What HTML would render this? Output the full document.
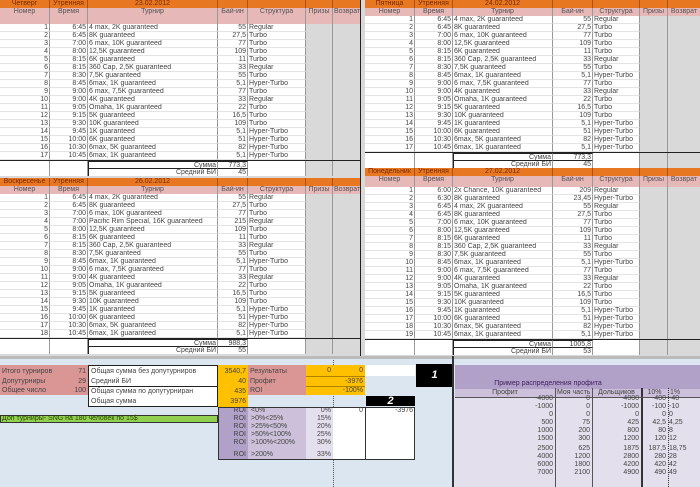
<!DOCTYPE html>
<html><head><meta charset="utf-8"><style>
*{margin:0;padding:0;box-sizing:border-box}
body{width:700px;height:487px;overflow:hidden;position:relative;background:#fff;font:7px/8px "Liberation Sans","DejaVu Sans",sans-serif;color:#444}
.a{position:absolute}
.tb{position:absolute;background:#d9d9d9}
.r{display:flex;height:8px;white-space:nowrap}
.r i{font-style:normal;display:block;height:8px;overflow:hidden;border-right:1px solid #999;padding:0 1px}
.d i{background:#fff;border-bottom:1px solid #e4e4e4}
.d i.p,.d i.v{background:#d9d9d9;border-bottom:none}
.d i.v{border-right:none}
.n,.b{text-align:right}
.o i{background:#e87722;color:#7a2a00;text-align:center;border-right:1px solid #b0500a}
.h i{background:#e6b8b7;text-align:center;color:#555}
.L .n{width:50px}.L .t{width:38px;text-align:right}.L .m{width:130px}.L .b{width:30px}.L .s{width:58px}.L .p{width:27px}.L .v{width:27px;border-right:none}
.R .n{width:50px}.R .t{width:38px;text-align:right}.R .m{width:100px}.R .b{width:40px}.R .s{width:47px}.R .p{width:28px}.R .v{width:32px;border-right:none}
.o .t,.h .t{text-align:center}
.h .n,.h .b{text-align:center}
.sm i{background:#fff;height:8px}
.sm i.p,.sm i.v{background:#d9d9d9}
.sm .m,.sm .b{border-top:1px solid #222}
.sm .m{text-align:right}
.bot{position:absolute;left:0;top:356px;width:700px;height:131px;background:#dce6f1}
.c{position:absolute;height:9px;line-height:9px;font-size:7px;padding:0 2px;white-space:nowrap;overflow:hidden}
.pk{background:#da9694}.or{background:#ffc000}.wh{background:#fff}
.pu1{background:#b1a0c7}.pu2{background:#ccc0da}.pu3{background:#e4dfec}
.blk{position:absolute;background:#000;color:#fff;font:italic bold 11px "Liberation Sans",sans-serif;text-align:center}
.pr{position:relative;height:8px}
.pr span{position:absolute}
.pr .c1{right:147px}.pr .c2{right:110px}.pr .c3{right:61px}.pr .c4{right:34px}.pr .c5{left:214px}
</style></head><body>

<div class="tb L" style="left:0;top:0;width:360px;height:178px">
<div class="r o"><i class="n">Четверг</i><i class="t">Утренняя</i><i class="m">23.02.2012</i><i class="b"></i><i class="s"></i><i class="p"></i><i class="v"></i></div>
<div class="r h" style="height:16px"><i class="n" style="height:16px">Номер</i><i class="t" style="height:16px">Время</i><i class="m" style="height:16px">Турнир</i><i class="b" style="height:16px">Бай-ин</i><i class="s" style="height:16px">Структура</i><i class="p" style="height:16px">Призы</i><i class="v" style="height:16px">Возврат</i></div>
<div class="r d"><i class="n">1</i><i class="t">6:45</i><i class="m">4 max, 2K guaranteed</i><i class="b">55</i><i class="s">Regular</i><i class="p"></i><i class="v"></i></div>
<div class="r d"><i class="n">2</i><i class="t">6:45</i><i class="m">8K guaranteed</i><i class="b">27,5</i><i class="s">Turbo</i><i class="p"></i><i class="v"></i></div>
<div class="r d"><i class="n">3</i><i class="t">7:00</i><i class="m">6 max, 10K guaranteed</i><i class="b">77</i><i class="s">Turbo</i><i class="p"></i><i class="v"></i></div>
<div class="r d"><i class="n">4</i><i class="t">8:00</i><i class="m">12,5K guaranteed</i><i class="b">109</i><i class="s">Turbo</i><i class="p"></i><i class="v"></i></div>
<div class="r d"><i class="n">5</i><i class="t">8:15</i><i class="m">6K guaranteed</i><i class="b">11</i><i class="s">Turbo</i><i class="p"></i><i class="v"></i></div>
<div class="r d"><i class="n">6</i><i class="t">8:15</i><i class="m">360 Cap, 2,5K guaranteed</i><i class="b">33</i><i class="s">Regular</i><i class="p"></i><i class="v"></i></div>
<div class="r d"><i class="n">7</i><i class="t">8:30</i><i class="m">7,5K guaranteed</i><i class="b">55</i><i class="s">Turbo</i><i class="p"></i><i class="v"></i></div>
<div class="r d"><i class="n">8</i><i class="t">8:45</i><i class="m">6max, 1K guaranteed</i><i class="b">5,1</i><i class="s">Hyper-Turbo</i><i class="p"></i><i class="v"></i></div>
<div class="r d"><i class="n">9</i><i class="t">9:00</i><i class="m">6 max, 7,5K guaranteed</i><i class="b">77</i><i class="s">Turbo</i><i class="p"></i><i class="v"></i></div>
<div class="r d"><i class="n">10</i><i class="t">9:00</i><i class="m">4K guaranteed</i><i class="b">33</i><i class="s">Regular</i><i class="p"></i><i class="v"></i></div>
<div class="r d"><i class="n">11</i><i class="t">9:05</i><i class="m">Omaha, 1K guaranteed</i><i class="b">22</i><i class="s">Turbo</i><i class="p"></i><i class="v"></i></div>
<div class="r d"><i class="n">12</i><i class="t">9:15</i><i class="m">5K guaranteed</i><i class="b">16,5</i><i class="s">Turbo</i><i class="p"></i><i class="v"></i></div>
<div class="r d"><i class="n">13</i><i class="t">9:30</i><i class="m">10K guaranteed</i><i class="b">109</i><i class="s">Turbo</i><i class="p"></i><i class="v"></i></div>
<div class="r d"><i class="n">14</i><i class="t">9:45</i><i class="m">1K guaranteed</i><i class="b">5,1</i><i class="s">Hyper-Turbo</i><i class="p"></i><i class="v"></i></div>
<div class="r d"><i class="n">15</i><i class="t">10:00</i><i class="m">6K guaranteed</i><i class="b">51</i><i class="s">Hyper-Turbo</i><i class="p"></i><i class="v"></i></div>
<div class="r d"><i class="n">16</i><i class="t">10:30</i><i class="m">6max, 5K guaranteed</i><i class="b">82</i><i class="s">Hyper-Turbo</i><i class="p"></i><i class="v"></i></div>
<div class="r d"><i class="n">17</i><i class="t">10:45</i><i class="m">6max, 1K guaranteed</i><i class="b">5,1</i><i class="s">Hyper-Turbo</i><i class="p"></i><i class="v"></i></div>
<div class="r sm" style="border-top:1px solid #222"><i class="n"></i><i class="t"></i><i class="m" style="border-left:1px solid #222">Сумма</i><i class="b">773,3</i><i class="s"></i><i class="p"></i><i class="v"></i></div>
<div class="r sm"><i class="n"></i><i class="t"></i><i class="m" style="border-left:1px solid #222">Средний БИ</i><i class="b">45</i><i class="s"></i><i class="p"></i><i class="v"></i></div>
</div>

<div class="tb L" style="left:0;top:178px;width:360px;height:178px">
<div class="r o"><i class="n">Воскресенье</i><i class="t">Утренняя</i><i class="m">26.02.2012</i><i class="b"></i><i class="s"></i><i class="p"></i><i class="v"></i></div>
<div class="r h"><i class="n">Номер</i><i class="t">Время</i><i class="m">Турнир</i><i class="b">Бай-ин</i><i class="s">Структура</i><i class="p">Призы</i><i class="v">Возврат</i></div>
<div class="r d"><i class="n">1</i><i class="t">6:45</i><i class="m">4 max, 2K guaranteed</i><i class="b">55</i><i class="s">Regular</i><i class="p"></i><i class="v"></i></div>
<div class="r d"><i class="n">2</i><i class="t">6:45</i><i class="m">8K guaranteed</i><i class="b">27,5</i><i class="s">Turbo</i><i class="p"></i><i class="v"></i></div>
<div class="r d"><i class="n">3</i><i class="t">7:00</i><i class="m">6 max, 10K guaranteed</i><i class="b">77</i><i class="s">Turbo</i><i class="p"></i><i class="v"></i></div>
<div class="r d"><i class="n">4</i><i class="t">7:00</i><i class="m">Pacific Rim Special, 16K guaranteed</i><i class="b">215</i><i class="s">Regular</i><i class="p"></i><i class="v"></i></div>
<div class="r d"><i class="n">5</i><i class="t">8:00</i><i class="m">12,5K guaranteed</i><i class="b">109</i><i class="s">Turbo</i><i class="p"></i><i class="v"></i></div>
<div class="r d"><i class="n">6</i><i class="t">8:15</i><i class="m">6K guaranteed</i><i class="b">11</i><i class="s">Turbo</i><i class="p"></i><i class="v"></i></div>
<div class="r d"><i class="n">7</i><i class="t">8:15</i><i class="m">360 Cap, 2,5K guaranteed</i><i class="b">33</i><i class="s">Regular</i><i class="p"></i><i class="v"></i></div>
<div class="r d"><i class="n">8</i><i class="t">8:30</i><i class="m">7,5K guaranteed</i><i class="b">55</i><i class="s">Turbo</i><i class="p"></i><i class="v"></i></div>
<div class="r d"><i class="n">9</i><i class="t">8:45</i><i class="m">6max, 1K guaranteed</i><i class="b">5,1</i><i class="s">Hyper-Turbo</i><i class="p"></i><i class="v"></i></div>
<div class="r d"><i class="n">10</i><i class="t">9:00</i><i class="m">6 max, 7,5K guaranteed</i><i class="b">77</i><i class="s">Turbo</i><i class="p"></i><i class="v"></i></div>
<div class="r d"><i class="n">11</i><i class="t">9:00</i><i class="m">4K guaranteed</i><i class="b">33</i><i class="s">Regular</i><i class="p"></i><i class="v"></i></div>
<div class="r d"><i class="n">12</i><i class="t">9:05</i><i class="m">Omaha, 1K guaranteed</i><i class="b">22</i><i class="s">Turbo</i><i class="p"></i><i class="v"></i></div>
<div class="r d"><i class="n">13</i><i class="t">9:15</i><i class="m">5K guaranteed</i><i class="b">16,5</i><i class="s">Turbo</i><i class="p"></i><i class="v"></i></div>
<div class="r d"><i class="n">14</i><i class="t">9:30</i><i class="m">10K guaranteed</i><i class="b">109</i><i class="s">Turbo</i><i class="p"></i><i class="v"></i></div>
<div class="r d"><i class="n">15</i><i class="t">9:45</i><i class="m">1K guaranteed</i><i class="b">5,1</i><i class="s">Hyper-Turbo</i><i class="p"></i><i class="v"></i></div>
<div class="r d"><i class="n">16</i><i class="t">10:00</i><i class="m">6K guaranteed</i><i class="b">51</i><i class="s">Hyper-Turbo</i><i class="p"></i><i class="v"></i></div>
<div class="r d"><i class="n">17</i><i class="t">10:30</i><i class="m">6max, 5K guaranteed</i><i class="b">82</i><i class="s">Hyper-Turbo</i><i class="p"></i><i class="v"></i></div>
<div class="r d"><i class="n">18</i><i class="t">10:45</i><i class="m">6max, 1K guaranteed</i><i class="b">5,1</i><i class="s">Hyper-Turbo</i><i class="p"></i><i class="v"></i></div>
<div class="r sm" style="border-top:1px solid #222"><i class="n"></i><i class="t"></i><i class="m" style="border-left:1px solid #222">Сумма</i><i class="b">988,3</i><i class="s"></i><i class="p"></i><i class="v"></i></div>
<div class="r sm"><i class="n"></i><i class="t"></i><i class="m" style="border-left:1px solid #222">Средний БИ</i><i class="b">55</i><i class="s"></i><i class="p"></i><i class="v"></i></div>
</div>

<div class="a" style="left:360px;top:0;width:5px;height:356px;background:#d9d9d9;border-left:1px solid #222"></div>

<div class="tb R" style="left:365px;top:0;width:335px;height:168px">
<div class="r o"><i class="n">Пятница</i><i class="t">Утренняя</i><i class="m">24.02.2012</i><i class="b"></i><i class="s"></i><i class="p"></i><i class="v"></i></div>
<div class="r h"><i class="n">Номер</i><i class="t">Время</i><i class="m">Турнир</i><i class="b">Бай-ин</i><i class="s">Структура</i><i class="p">Призы</i><i class="v">Возврат</i></div>
<div class="r d"><i class="n">1</i><i class="t">6:45</i><i class="m">4 max, 2K guaranteed</i><i class="b">55</i><i class="s">Regular</i><i class="p"></i><i class="v"></i></div>
<div class="r d"><i class="n">2</i><i class="t">6:45</i><i class="m">8K guaranteed</i><i class="b">27,5</i><i class="s">Turbo</i><i class="p"></i><i class="v"></i></div>
<div class="r d"><i class="n">3</i><i class="t">7:00</i><i class="m">6 max, 10K guaranteed</i><i class="b">77</i><i class="s">Turbo</i><i class="p"></i><i class="v"></i></div>
<div class="r d"><i class="n">4</i><i class="t">8:00</i><i class="m">12,5K guaranteed</i><i class="b">109</i><i class="s">Turbo</i><i class="p"></i><i class="v"></i></div>
<div class="r d"><i class="n">5</i><i class="t">8:15</i><i class="m">6K guaranteed</i><i class="b">11</i><i class="s">Turbo</i><i class="p"></i><i class="v"></i></div>
<div class="r d"><i class="n">6</i><i class="t">8:15</i><i class="m">360 Cap, 2,5K guaranteed</i><i class="b">33</i><i class="s">Regular</i><i class="p"></i><i class="v"></i></div>
<div class="r d"><i class="n">7</i><i class="t">8:30</i><i class="m">7,5K guaranteed</i><i class="b">55</i><i class="s">Turbo</i><i class="p"></i><i class="v"></i></div>
<div class="r d"><i class="n">8</i><i class="t">8:45</i><i class="m">6max, 1K guaranteed</i><i class="b">5,1</i><i class="s">Hyper-Turbo</i><i class="p"></i><i class="v"></i></div>
<div class="r d"><i class="n">9</i><i class="t">9:00</i><i class="m">6 max, 7,5K guaranteed</i><i class="b">77</i><i class="s">Turbo</i><i class="p"></i><i class="v"></i></div>
<div class="r d"><i class="n">10</i><i class="t">9:00</i><i class="m">4K guaranteed</i><i class="b">33</i><i class="s">Regular</i><i class="p"></i><i class="v"></i></div>
<div class="r d"><i class="n">11</i><i class="t">9:05</i><i class="m">Omaha, 1K guaranteed</i><i class="b">22</i><i class="s">Turbo</i><i class="p"></i><i class="v"></i></div>
<div class="r d"><i class="n">12</i><i class="t">9:15</i><i class="m">5K guaranteed</i><i class="b">16,5</i><i class="s">Turbo</i><i class="p"></i><i class="v"></i></div>
<div class="r d"><i class="n">13</i><i class="t">9:30</i><i class="m">10K guaranteed</i><i class="b">109</i><i class="s">Turbo</i><i class="p"></i><i class="v"></i></div>
<div class="r d"><i class="n">14</i><i class="t">9:45</i><i class="m">1K guaranteed</i><i class="b">5,1</i><i class="s">Hyper-Turbo</i><i class="p"></i><i class="v"></i></div>
<div class="r d"><i class="n">15</i><i class="t">10:00</i><i class="m">6K guaranteed</i><i class="b">51</i><i class="s">Hyper-Turbo</i><i class="p"></i><i class="v"></i></div>
<div class="r d"><i class="n">16</i><i class="t">10:30</i><i class="m">6max, 5K guaranteed</i><i class="b">82</i><i class="s">Hyper-Turbo</i><i class="p"></i><i class="v"></i></div>
<div class="r d"><i class="n">17</i><i class="t">10:45</i><i class="m">6max, 1K guaranteed</i><i class="b">5,1</i><i class="s">Hyper-Turbo</i><i class="p"></i><i class="v"></i></div>
<div class="r sm" style="border-top:1px solid #222"><i class="n"></i><i class="t"></i><i class="m" style="border-left:1px solid #222">Сумма</i><i class="b">773,3</i><i class="s"></i><i class="p"></i><i class="v"></i></div>
<div class="r sm"><i class="n"></i><i class="t"></i><i class="m" style="border-left:1px solid #222">Средний БИ</i><i class="b">45</i><i class="s"></i><i class="p"></i><i class="v"></i></div>
</div>

<div class="tb R" style="left:365px;top:168px;width:335px;height:188px">
<div class="r o"><i class="n">Понедельник</i><i class="t">Утренняя</i><i class="m">27.02.2012</i><i class="b"></i><i class="s"></i><i class="p"></i><i class="v"></i></div>
<div class="r h" style="height:11px"><i class="n" style="height:11px">Номер</i><i class="t" style="height:11px">Время</i><i class="m" style="height:11px">Турнир</i><i class="b" style="height:11px">Бай-ин</i><i class="s" style="height:11px">Структура</i><i class="p" style="height:11px">Призы</i><i class="v" style="height:11px">Возврат</i></div>
<div class="r d"><i class="n">1</i><i class="t">6:00</i><i class="m">2x Chance, 10K guaranteed</i><i class="b">209</i><i class="s">Regular</i><i class="p"></i><i class="v"></i></div>
<div class="r d"><i class="n">2</i><i class="t">6:30</i><i class="m">8K guaranteed</i><i class="b">23,45</i><i class="s">Hyper-Turbo</i><i class="p"></i><i class="v"></i></div>
<div class="r d"><i class="n">3</i><i class="t">6:45</i><i class="m">4 max, 2K guaranteed</i><i class="b">55</i><i class="s">Regular</i><i class="p"></i><i class="v"></i></div>
<div class="r d"><i class="n">4</i><i class="t">6:45</i><i class="m">8K guaranteed</i><i class="b">27,5</i><i class="s">Turbo</i><i class="p"></i><i class="v"></i></div>
<div class="r d"><i class="n">5</i><i class="t">7:00</i><i class="m">6 max, 10K guaranteed</i><i class="b">77</i><i class="s">Turbo</i><i class="p"></i><i class="v"></i></div>
<div class="r d"><i class="n">6</i><i class="t">8:00</i><i class="m">12,5K guaranteed</i><i class="b">109</i><i class="s">Turbo</i><i class="p"></i><i class="v"></i></div>
<div class="r d"><i class="n">7</i><i class="t">8:15</i><i class="m">6K guaranteed</i><i class="b">11</i><i class="s">Turbo</i><i class="p"></i><i class="v"></i></div>
<div class="r d"><i class="n">8</i><i class="t">8:15</i><i class="m">360 Cap, 2,5K guaranteed</i><i class="b">33</i><i class="s">Regular</i><i class="p"></i><i class="v"></i></div>
<div class="r d"><i class="n">9</i><i class="t">8:30</i><i class="m">7,5K guaranteed</i><i class="b">55</i><i class="s">Turbo</i><i class="p"></i><i class="v"></i></div>
<div class="r d"><i class="n">10</i><i class="t">8:45</i><i class="m">6max, 1K guaranteed</i><i class="b">5,1</i><i class="s">Hyper-Turbo</i><i class="p"></i><i class="v"></i></div>
<div class="r d"><i class="n">11</i><i class="t">9:00</i><i class="m">6 max, 7,5K guaranteed</i><i class="b">77</i><i class="s">Turbo</i><i class="p"></i><i class="v"></i></div>
<div class="r d"><i class="n">12</i><i class="t">9:00</i><i class="m">4K guaranteed</i><i class="b">33</i><i class="s">Regular</i><i class="p"></i><i class="v"></i></div>
<div class="r d"><i class="n">13</i><i class="t">9:05</i><i class="m">Omaha, 1K guaranteed</i><i class="b">22</i><i class="s">Turbo</i><i class="p"></i><i class="v"></i></div>
<div class="r d"><i class="n">14</i><i class="t">9:15</i><i class="m">5K guaranteed</i><i class="b">16,5</i><i class="s">Turbo</i><i class="p"></i><i class="v"></i></div>
<div class="r d"><i class="n">15</i><i class="t">9:30</i><i class="m">10K guaranteed</i><i class="b">109</i><i class="s">Turbo</i><i class="p"></i><i class="v"></i></div>
<div class="r d"><i class="n">16</i><i class="t">9:45</i><i class="m">1K guaranteed</i><i class="b">5,1</i><i class="s">Hyper-Turbo</i><i class="p"></i><i class="v"></i></div>
<div class="r d"><i class="n">17</i><i class="t">10:00</i><i class="m">6K guaranteed</i><i class="b">51</i><i class="s">Hyper-Turbo</i><i class="p"></i><i class="v"></i></div>
<div class="r d"><i class="n">18</i><i class="t">10:30</i><i class="m">6max, 5K guaranteed</i><i class="b">82</i><i class="s">Hyper-Turbo</i><i class="p"></i><i class="v"></i></div>
<div class="r d"><i class="n">19</i><i class="t">10:45</i><i class="m">6max, 1K guaranteed</i><i class="b">5,1</i><i class="s">Hyper-Turbo</i><i class="p"></i><i class="v"></i></div>
<div class="r sm" style="border-top:1px solid #222"><i class="n"></i><i class="t"></i><i class="m" style="border-left:1px solid #222">Сумма</i><i class="b">1005,8</i><i class="s"></i><i class="p"></i><i class="v"></i></div>
<div class="r sm"><i class="n"></i><i class="t"></i><i class="m" style="border-left:1px solid #222">Средний БИ</i><i class="b">53</i><i class="s"></i><i class="p"></i><i class="v"></i></div>
</div>

<div class="bot"></div>
<div class="a" style="left:333px;top:356px;height:131px;border-left:1px dotted #555"></div>
<div class="a" style="left:0;top:356px;width:700px;height:3px;background:#bbb"></div>

<div class="a pk" style="left:0;top:365px;width:88px;height:30px"></div>
<div class="c" style="left:0;top:367px;width:88px">Итого турниров<span style="position:absolute;right:2px">71</span></div>
<div class="c" style="left:0;top:377px;width:88px">Допутурниры<span style="position:absolute;right:2px">29</span></div>
<div class="c" style="left:0;top:386px;width:88px">Общее число<span style="position:absolute;right:2px">100</span></div>

<div class="a wh" style="left:88px;top:365px;width:130px;height:42px;border:1px solid #222"></div>
<div class="a" style="left:88px;top:386px;width:130px;border-top:1px solid #222"></div>
<div class="c" style="left:89px;top:367px">Общая сумма без допутурниров</div>
<div class="c" style="left:89px;top:377px">Средний БИ</div>
<div class="c" style="left:89px;top:387px">Общая сумма по допутурниран</div>
<div class="c" style="left:89px;top:397px">Общая сумма</div>
<div class="a or" style="left:218px;top:365px;width:30px;height:42px"></div>
<div class="c" style="left:218px;top:367px;width:30px;text-align:right">3540,7</div>
<div class="c" style="left:218px;top:377px;width:30px;text-align:right">40</div>
<div class="c" style="left:218px;top:387px;width:30px;text-align:right">435</div>
<div class="c" style="left:218px;top:397px;width:30px;text-align:right">3976</div>

<div class="a pk" style="left:248px;top:365px;width:58px;height:30px"></div>
<div class="c" style="left:248px;top:367px">Результаты</div>
<div class="c" style="left:248px;top:377px">Профит</div>
<div class="c" style="left:248px;top:386px">ROI</div>
<div class="a or" style="left:306px;top:365px;width:59px;height:30px"></div>
<div class="a" style="left:306px;top:376px;width:59px;border-top:1px solid #b08000"></div>
<div class="a" style="left:306px;top:386px;width:59px;border-top:1px solid #b08000"></div>
<div class="c" style="left:306px;top:366px;width:27px;text-align:right">0</div>
<div class="c" style="left:333px;top:366px;width:32px;text-align:right">0</div>
<div class="c" style="left:306px;top:377px;width:59px;text-align:right">-3976</div>
<div class="c" style="left:306px;top:386px;width:59px;text-align:right">-100%</div>
<div class="a wh" style="left:365px;top:365px;width:50px;height:11px"></div>

<div class="blk" style="left:416px;top:364px;width:37px;height:23px;line-height:23px">1</div>
<div class="blk" style="left:366px;top:396px;width:49px;height:10px;line-height:10px">2</div>

<div class="a" style="left:0;top:415px;width:218px;height:8px;background:#92d050;border:1px solid #333"></div>
<div class="c" style="left:0;top:414px;color:#2a4a00">Доп турниры- SNG на 180 человек по 15$</div>

<div class="a" style="left:218px;top:407px;width:197px;height:53px;border:1px solid #333;background:#fff"></div>
<div class="a pu1" style="left:219px;top:408px;width:29px;height:51px"></div>
<div class="a pu2" style="left:248px;top:408px;width:58px;height:51px"></div>
<div class="a pu3" style="left:306px;top:408px;width:27px;height:51px"></div>
<div class="a" style="left:365px;top:407px;height:53px;border-left:1px solid #333"></div>
<div class="c" style="left:219px;top:406px;width:29px;text-align:right">ROI</div><div class="c" style="left:249px;top:406px">&lt;0%</div><div class="c" style="left:306px;top:406px;width:27px;text-align:right">0%</div><div class="c" style="left:333px;top:406px;width:32px;text-align:right">0</div><div class="c" style="left:365px;top:406px;width:50px;text-align:right">-3976</div>
<div class="c" style="left:219px;top:414px;width:29px;text-align:right">ROI</div><div class="c" style="left:249px;top:414px">&gt;0%&lt;25%</div><div class="c" style="left:306px;top:414px;width:27px;text-align:right">15%</div>
<div class="c" style="left:219px;top:422px;width:29px;text-align:right">ROI</div><div class="c" style="left:249px;top:422px">&gt;25%&lt;50%</div><div class="c" style="left:306px;top:422px;width:27px;text-align:right">20%</div>
<div class="c" style="left:219px;top:430px;width:29px;text-align:right">ROI</div><div class="c" style="left:249px;top:430px">&gt;50%&lt;100%</div><div class="c" style="left:306px;top:430px;width:27px;text-align:right">25%</div>
<div class="c" style="left:219px;top:438px;width:29px;text-align:right">ROI</div><div class="c" style="left:249px;top:438px">&gt;100%&lt;200%</div><div class="c" style="left:306px;top:438px;width:27px;text-align:right">30%</div>
<div class="c" style="left:219px;top:450px;width:29px;text-align:right">ROI</div><div class="c" style="left:249px;top:450px">&gt;200%</div><div class="c" style="left:306px;top:450px;width:27px;text-align:right">33%</div>

<div class="a" style="left:452px;top:356px;height:131px;border-left:2px solid #333"></div>
<div class="a pu1" style="left:455px;top:365px;width:245px;height:24px"></div>
<div class="a pu2" style="left:455px;top:389px;width:245px;height:8px"></div>
<div class="c" style="left:455px;top:379px;width:186px;text-align:center;color:#402060">Пример распределения профита</div>
<div class="a pu3" style="left:455px;top:397px;width:245px;height:90px"></div>
<div class="c" style="left:455px;top:388px;width:100px;text-align:center">Профит</div>
<div class="c" style="left:555px;top:388px;width:37px;text-align:center">Моя часть</div>
<div class="c" style="left:592px;top:388px;width:49px;text-align:center">Дольщиков</div>
<div class="c" style="left:641px;top:388px;width:27px;text-align:center">10%</div>
<div class="c" style="left:668px;top:388px;width:32px">1%</div>
<div class="a" style="left:555px;top:388px;height:99px;border-left:1px solid #555"></div>
<div class="a" style="left:592px;top:388px;height:99px;border-left:1px solid #555"></div>
<div class="a" style="left:641px;top:388px;height:99px;border-left:2px solid #333"></div>
<div class="a" style="left:668px;top:388px;height:99px;border-left:1px dotted #333"></div>
<div class="a" style="left:455px;top:397px;width:245px;border-top:1px solid #555"></div>

<div class="a" style="left:455px;top:395px;width:245px;font-size:7px;line-height:8px">
<div class="pr"><span class="c1">-4000</span><span class="c2">0</span><span class="c3">-4000</span><span class="c4">-400</span><span class="c5">-40</span></div>
<div class="pr"><span class="c1">-1000</span><span class="c2">0</span><span class="c3">-1000</span><span class="c4">-100</span><span class="c5">-10</span></div>
<div class="pr"><span class="c1">0</span><span class="c2">0</span><span class="c3">0</span><span class="c4">0</span><span class="c5">0</span></div>
<div class="pr"><span class="c1">500</span><span class="c2">75</span><span class="c3">425</span><span class="c4">42,5</span><span class="c5">4,25</span></div>
<div class="pr"><span class="c1">1000</span><span class="c2">200</span><span class="c3">800</span><span class="c4">80</span><span class="c5">8</span></div>
<div class="pr"><span class="c1">1500</span><span class="c2">300</span><span class="c3">1200</span><span class="c4">120</span><span class="c5">12</span></div>
<div class="pr" style="height:10px;top:2px"><span class="c1">2500</span><span class="c2">625</span><span class="c3">1875</span><span class="c4">187,5</span><span class="c5">18,75</span></div>
<div class="pr"><span class="c1">4000</span><span class="c2">1200</span><span class="c3">2800</span><span class="c4">280</span><span class="c5">28</span></div>
<div class="pr"><span class="c1">6000</span><span class="c2">1800</span><span class="c3">4200</span><span class="c4">420</span><span class="c5">42</span></div>
<div class="pr"><span class="c1">7000</span><span class="c2">2100</span><span class="c3">4900</span><span class="c4">490</span><span class="c5">49</span></div>
</div>
</body></html>
